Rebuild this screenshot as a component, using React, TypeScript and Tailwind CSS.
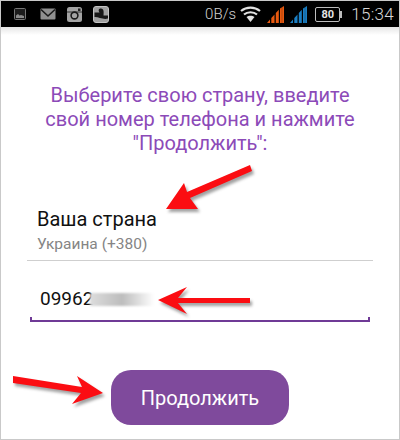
import React from 'react';

const SignalBars: React.FC<{ color: string }> = ({ color }) => (
    <svg width="18" height="17" viewBox="0 0 18 17">
        <path d="M0 17l3-3.500V17zM4.300 17V12l3.200-3.500V17zM8.800 17V7l3-3.300V17zM13 17V2.600L17 0v17z" fill={color} />
        <path d="M15 17V1" stroke="#000" strokeWidth="0.6" opacity="0.4" />
    </svg>
);

const StatusBar: React.FC = () => (
    <div className="h-[26px] bg-black flex items-center text-[#c4c4c4] font-['Roboto',sans-serif]">
        <div className="flex items-center ml-[13px]">
            <svg width="12" height="12" viewBox="0 0 12 12" className="mr-[14px]">
                <rect x="0.500" y="0.500" width="11" height="11" rx="1" fill="#1c1c1c" stroke="#777" />
                <path d="M2 10V7.500l2-1.500 1.500 1.500 1.500-.5 3 1V10z" fill="#8a8a8a" />
            </svg>
            <svg width="16" height="12" viewBox="0 0 16 12" className="mr-[11px]">
                <rect x="0.500" y="0.500" width="15" height="11" rx="1" fill="#8f8f8f" />
                <path d="M1 1.500L8 8l7-6.500" fill="none" stroke="#1a1a1a" strokeWidth="1.600" />
            </svg>
            <svg width="15" height="15" viewBox="0 0 15 15" className="mr-[11px]">
                <rect x="0" y="0" width="15" height="15" rx="2.500" fill="#a3a3a3" />
                <rect x="0" y="4.500" width="15" height="1" fill="#333" />
                <circle cx="7.500" cy="8.500" r="3.400" fill="#a3a3a3" stroke="#1a1a1a" strokeWidth="1.600" />
                <rect x="11" y="1.500" width="2.500" height="2.500" fill="#222" />
            </svg>
            <svg width="16" height="17" viewBox="0 0 16 17">
                <rect x="0.500" y="0.500" width="15" height="16" rx="2.500" fill="#a0a0a0" stroke="#c4c4c4" />
                <path d="M1.500 6.500H6.500C4 3 8 1.500 10 3.500C11 5 10.500 7.500 10.500 9.500H15V12.500C10 14 5 10.500 1.500 11z" fill="#161616" />
            </svg>
        </div>
        <div className="ml-auto flex items-center mr-[5px]">
            <span className="text-[15px] leading-none font-light mr-[4px] text-[#d0d0d0]">0B/s</span>
            <svg width="21" height="16" viewBox="0 0 21 16" className="mr-[6px]">
                <g fill="none" stroke="#e2e2e2" strokeWidth="2.200">
                    <path d="M1 5c5.500-4.500 13.500-4.500 19 0" />
                    <path d="M4 8.500c3.500-3 9.500-3 13 0" />
                </g>
                <path d="M6.500 11c2.200-1.700 5.800-1.700 8 0L10.500 16z" fill="#e2e2e2" />
            </svg>
            <div className="mr-[5px]">
                <SignalBars color="#e8590f" />
            </div>
            <div className="mr-[7px]">
                <SignalBars color="#1b7fc4" />
            </div>
            <div className="w-[25px] h-[15px] border border-[#bdbdbd] rounded-[2px] flex items-center justify-center text-[11px] leading-none font-bold text-[#e4e4e4]">
                80
            </div>
            <div className="w-[2px] h-[7px] bg-[#bdbdbd] mr-[9px]"></div>
            <span className="text-[17px] leading-none font-light text-[#d8d8d8] tracking-[0.3px]">15:34</span>
        </div>
    </div>
);

const Arrow: React.FC<{ points: string }> = ({ points }) => (
    <>
        <polygon points={points} fill="#444" opacity="0.5" transform="translate(2 3)" className="blur-[1.5px]" />
        <polygon points={points} fill="#fb0d12" />
    </>
);

export default function App() {
    return (
        <div className="relative w-[400px] h-[440px] bg-white border border-[#c9c9c9] overflow-hidden font-['Roboto',sans-serif]">
            <StatusBar />
            <div className="h-[8px] bg-gradient-to-b from-[#e6e6e6] to-white"></div>

            <p className="mt-[48px] text-center text-[20px] leading-[24px] text-[#8c4ab8]">
                Выберите свою страну, введите
                <br />
                свой номер телефона и нажмите
                <br />
                "Продолжить":
            </p>

            <div className="mt-[52px] mx-[26px] border-b border-[#cfcfcf] pb-[6px]">
                <div className="pl-[10px] text-[20px] leading-[24px] text-[#111111]">Ваша страна</div>
                <div className="pl-[10px] mt-[3px] text-[15.5px] leading-[20px] text-[#858585]">Украина (+380)</div>
            </div>

            <div className="mt-[26px] mx-[29px]">
                <div className="flex items-center pl-[10px] h-[24px] text-[19px] leading-[24px] text-[#111111]">
                    09962
                    <div className="w-[64px] h-[13px] -ml-[3px] bg-gradient-to-r from-[#dddddd] via-[#bdbdbd] to-white blur-[1px]"></div>
                </div>
                <div className="mt-[6px] h-[5px] border-x-2 border-b-2 border-[#6f3a96]"></div>
            </div>

            <div className="flex justify-center mt-[48px]">
                <button className="w-[178px] h-[55px] rounded-[20px] bg-[#7f4a9c] text-white text-[20px] font-['Roboto',sans-serif]">
                    Продолжить
                </button>
            </div>

            {/* red arrows drawn over the screen */}
            <svg width="400" height="440" viewBox="0 0 400 440" className="absolute -left-px -top-px pointer-events-none">
                <Arrow points="250,165 252,171 190,198 198,209 166,209 184,183 187,192" />
                <Arrow points="250,298 250,303 178,303 187,314 158,300 187,287 178,298" />
                <Arrow points="13,376 13,383 81,393 72,404 103,393 77,376 82,387" />
            </svg>
        </div>
    );
}
